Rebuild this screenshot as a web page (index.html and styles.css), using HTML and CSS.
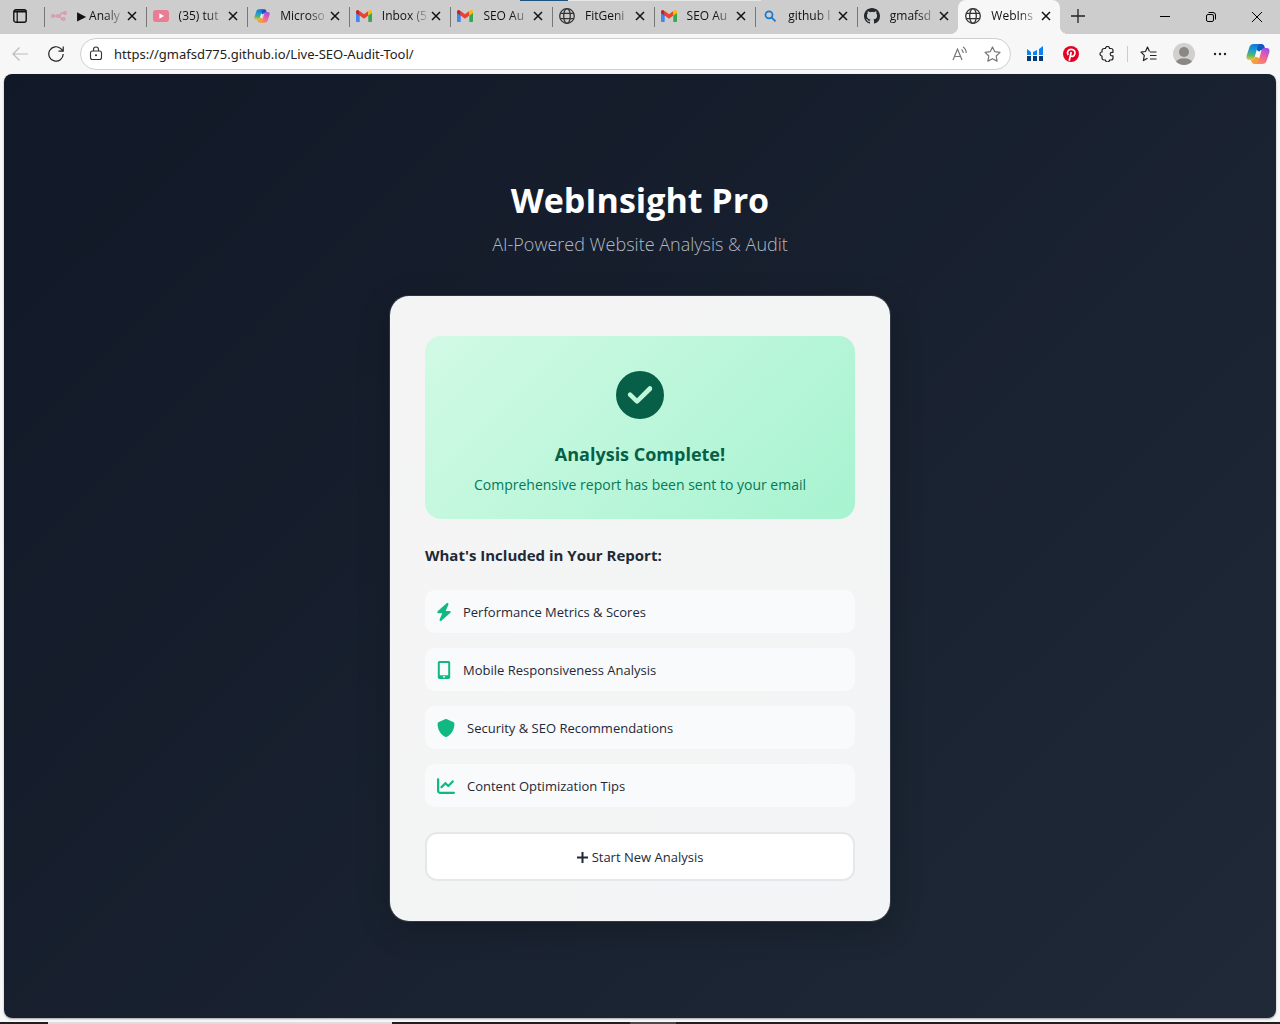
FILE: index.html
```html
<!DOCTYPE html>
<html lang="en">
<head>
<meta charset="utf-8">
<title>WebInsight Pro</title>
<link rel="stylesheet" href="styles.css">
</head>
<body>
<svg class="defs" aria-hidden="true">
  <defs>
    <linearGradient id="cpBlue" x1="0.4" y1="0" x2="0.3" y2="1"><stop offset="0" stop-color="#1378d8"/><stop offset=".4" stop-color="#1b9fd0"/><stop offset=".7" stop-color="#5cb46a"/><stop offset="1" stop-color="#e4cf2a"/></linearGradient>
    <linearGradient id="cpPink" x1=".7" y1="0" x2=".3" y2="1"><stop offset="0" stop-color="#a04de8"/><stop offset=".5" stop-color="#e8629f"/><stop offset="1" stop-color="#ff8a5c"/></linearGradient>
    <symbol id="copilot" viewBox="0 0 24 24">
      <path fill="#1557c0" d="M10 2h5.500c1.600 0 2.500 1 3 2.500L19.500 8H16c-1.500 0-2.400.7-2.900 2L11 8z"/>
      <path fill="url(#cpBlue)" d="M8 2h6c-1.400.4-2 1.400-2.500 3L8.700 15c-.6 2-1.500 3-3.400 3H3.500C.8 18 0 16 .7 13.500L3.300 5.500C4.100 3 5.400 2 8 2z"/>
      <path fill="#f2a03c" d="M14 22H8.500c-1.600 0-2.500-1-3-2.500L4.800 17.900C7.500 18 8.500 17 9.300 14.500L13 16z"/>
      <path fill="url(#cpPink)" d="M16 22h-6c1.400-.4 2-1.400 2.500-3l2.800-10c.6-2 1.500-3 3.400-3h1.800c2.700 0 3.500 2 2.800 4.500l-2.600 8C19.900 21 18.600 22 16 22z"/>
      <path fill="#f7f7f7" d="M13.200 9.500L10.900 15h-1.600L11 9.200z"/>
    </symbol>
    <symbol id="gmail" viewBox="0 0 16 12">
      <path fill="#4285f4" d="M0 2v9c0 .6.400 1 1 1h2.700V5z"/><path fill="#34a853" d="M12.300 12H15c.6 0 1-.4 1-1V2l-3.700 3z"/>
      <path fill="#ea4335" d="M3.700 5.500V1L8 4.300 12.300 1v4.500L8 8.800z"/><path fill="#c5221f" d="M0 2v1l3.700 2.700V1.200L2.600.4C1.500-.4 0 .3 0 2z"/><path fill="#fbbc04" d="M12.300 1v4.700L16 3V2c0-1.700-1.500-2.400-2.600-1.600z"/>
    </symbol>
    <symbol id="globe" viewBox="0 0 16 16"><g fill="none" stroke="#333" stroke-width="1.300"><circle cx="8" cy="8" r="7.300"/><ellipse cx="8" cy="8" rx="3.300" ry="7.300"/><path d="M1.300 5.400h13.400M1.300 10.600h13.400"/></g></symbol>
    <symbol id="close" viewBox="0 0 10 10"><path d="M1 1l8 8M9 1L1 9" fill="none" stroke="#111" stroke-width="1.500"/></symbol>
  </defs>
</svg>

<header class="browser">
  <div class="tabstrip">
    <button class="tab-actions" aria-label="Tab actions"><svg width="14" height="14" viewBox="0 0 14 14"><rect x=".8" y=".8" width="12.400" height="12.400" rx="2" fill="none" stroke="#111" stroke-width="1.400"/><path d="M4.200 3v10" stroke="#111" stroke-width="1.200"/><path d="M1 2.500h12" stroke="#111" stroke-width="2"/></svg></button>
    <nav class="tabs" aria-label="Tabs">
      <div class="tab"><svg class="favicon dim" viewBox="0 0 16 16"><g fill="none" stroke="#ea4b71" stroke-width="1.400"><circle cx="2" cy="8" r="1.300"/><circle cx="7" cy="8" r="1.300"/><circle cx="14" cy="5" r="1.300"/><circle cx="12.500" cy="11" r="1.300"/><path d="M3.300 8h2.400M8.300 8C10 8 9 5 11 5h1.700M8.300 8c1.700 0 1 3 2.900 3"/></g></svg><a href="#" class="tab-title">▶ Analy</a><button class="tab-close" aria-label="Close tab"><svg viewBox="0 0 10 10"><use href="#close"/></svg></button></div>
      <div class="tab"><svg class="favicon" viewBox="0 0 16 16"><rect y="2" width="16" height="12" rx="3" fill="#ea7d92"/><path d="M6.300 5.300v5.400L11 8z" fill="#fff"/></svg><a href="#" class="tab-title">(35) tut</a><button class="tab-close" aria-label="Close tab"><svg viewBox="0 0 10 10"><use href="#close"/></svg></button></div>
      <div class="tab"><svg class="favicon" viewBox="0 0 24 24"><use href="#copilot"/></svg><a href="#" class="tab-title">Microso</a><button class="tab-close" aria-label="Close tab"><svg viewBox="0 0 10 10"><use href="#close"/></svg></button></div>
      <div class="tab"><svg class="favicon" viewBox="0 -2 16 16"><use href="#gmail" width="16" height="12"/></svg><a href="#" class="tab-title">Inbox (5</a><button class="tab-close" aria-label="Close tab"><svg viewBox="0 0 10 10"><use href="#close"/></svg></button></div>
      <div class="tab"><svg class="favicon" viewBox="0 -2 16 16"><use href="#gmail" width="16" height="12"/></svg><a href="#" class="tab-title">SEO Au</a><button class="tab-close" aria-label="Close tab"><svg viewBox="0 0 10 10"><use href="#close"/></svg></button></div>
      <div class="tab"><svg class="favicon" viewBox="0 0 16 16"><use href="#globe"/></svg><a href="#" class="tab-title">FitGeni</a><button class="tab-close" aria-label="Close tab"><svg viewBox="0 0 10 10"><use href="#close"/></svg></button></div>
      <div class="tab"><svg class="favicon" viewBox="0 -2 16 16"><use href="#gmail" width="16" height="12"/></svg><a href="#" class="tab-title">SEO Au</a><button class="tab-close" aria-label="Close tab"><svg viewBox="0 0 10 10"><use href="#close"/></svg></button></div>
      <div class="tab"><svg class="favicon" viewBox="0 0 16 16"><g fill="none" stroke="#1478d4" stroke-width="1.700"><circle cx="7" cy="6.800" r="3.500"/><path d="M9.500 9.300l4 4"/></g></svg><a href="#" class="tab-title">github l</a><button class="tab-close" aria-label="Close tab"><svg viewBox="0 0 10 10"><use href="#close"/></svg></button></div>
      <div class="tab"><svg class="favicon" viewBox="0 0 16 16"><path fill="#24292f" d="M8 0C3.580 0 0 3.580 0 8c0 3.540 2.290 6.530 5.470 7.590.4.070.550-.170.550-.380 0-.190-.010-.820-.010-1.490-2.010.370-2.530-.490-2.690-.940-.090-.230-.480-.940-.820-1.130-.280-.150-.680-.520-.010-.530.630-.010 1.080.580 1.230.820.720 1.210 1.870.870 2.330.660.070-.520.280-.870.510-1.070-1.780-.200-3.640-.890-3.640-3.950 0-.870.310-1.590.820-2.150-.080-.200-.360-1.020.080-2.120 0 0 .670-.210 2.200.820a7.600 7.600 0 0 1 4 0c1.530-1.040 2.200-.820 2.200-.820.440 1.100.160 1.920.080 2.120.510.560.820 1.270.820 2.150 0 3.070-1.870 3.750-3.650 3.950.290.250.540.730.540 1.480 0 1.070-.010 1.930-.010 2.200 0 .210.150.460.550.380A8.010 8.010 0 0 0 16 8c0-4.420-3.580-8-8-8z"/></svg><a href="#" class="tab-title">gmafsd</a><button class="tab-close" aria-label="Close tab"><svg viewBox="0 0 10 10"><use href="#close"/></svg></button></div>
      <div class="tab active"><svg class="favicon" viewBox="0 0 16 16"><use href="#globe"/></svg><a href="#" class="tab-title">WebIns</a><button class="tab-close" aria-label="Close tab"><svg viewBox="0 0 10 10"><use href="#close"/></svg></button></div>
    </nav>
    <button class="new-tab" aria-label="New tab"><svg width="14" height="14" viewBox="0 0 14 14"><path d="M7 0v14M0 7h14" stroke="#222" stroke-width="1.300"/></svg></button>
    <div class="window-controls">
      <button aria-label="Minimize"><svg width="10" height="10" viewBox="0 0 10 10"><path d="M0 4.500h10" stroke="#000"/></svg></button>
      <button aria-label="Restore"><svg width="10" height="10" viewBox="0 0 10 10" fill="none" stroke="#000"><rect x=".5" y="2.500" width="7" height="7" rx="1.500"/><path d="M2.500.5H7A2.500 2.500 0 0 1 9.500 3v4.500"/></svg></button>
      <button aria-label="Close"><svg width="10" height="10" viewBox="0 0 10 10"><path d="M0 0l10 10M10 0L0 10" stroke="#000"/></svg></button>
    </div>
  </div>

  <div class="toolbar">
    <button class="tool" aria-label="Back"><svg width="16" height="14" viewBox="0 0 16 14" fill="none" stroke="#bbb" stroke-width="1.200"><path d="M16 7H1M7.500.5L1 7l6.500 6.500"/></svg></button>
    <button class="tool" aria-label="Refresh"><svg width="16" height="16" viewBox="0 0 16 16" fill="none" stroke="#222" stroke-width="1.200"><path d="M15.200 8A7.200 7.200 0 1 1 12.800 2.600L15 4.800M15.200.5v4.700h-4.700"/></svg></button>
    <div class="address">
      <svg width="14" height="16" viewBox="0 0 14 16" fill="none" stroke="#333" stroke-width="1.100"><rect x="1.500" y="5" width="11" height="8.500" rx="2"/><path d="M4.500 5V3.500a2.500 2.500 0 0 1 5 0V5"/><circle cx="7" cy="9.300" r=".5" fill="#333"/></svg>
      <input type="text" aria-label="Address" value="https://gmafsd775.github.io/Live-SEO-Audit-Tool/">
      <button aria-label="Read aloud"><svg width="16" height="16" viewBox="0 0 16 16" fill="none" stroke="#777" stroke-width="1.200"><path d="M1 14L5.500 3 10 14M2.800 10.500h5.400M9.500 3.500c1.200.8 1.700 2 1.700 3.500M11 1c2 1.200 3.200 3 3.200 6"/></svg></button>
      <button aria-label="Favorite"><svg width="17" height="16" viewBox="0 0 17 16" fill="none" stroke="#777" stroke-width="1.200" stroke-linejoin="round"><path d="M8.500 1l2.300 4.700 5.200.7-3.800 3.600.9 5.100-4.600-2.400-4.600 2.400.9-5.100L1 6.400l5.200-.7z"/></svg></button>
    </div>
    <button class="tool" aria-label="Similarweb"><svg width="16" height="16" viewBox="0 0 16 16"><path fill="#0a84f5" d="M0 3l4 3v3H0zM6 6l4-2v5H6zM12 3l4-3v9h-4z"/><path fill="#073a75" d="M0 10h4v5H0zM6 10h4v5H6zM12 10h4v5h-4z"/></svg></button>
    <button class="tool" aria-label="Pinterest"><svg width="16" height="16" viewBox="0 0 16 16"><circle cx="8" cy="8" r="8" fill="#e60023"/><path d="M6.200 14.800L8.200 6M5.200 9C3.300 6 5.300 3.400 8.200 3.400c3 0 4.300 2.200 3.600 4.600-.7 2.600-3.500 3.200-4.300 1.500" fill="none" stroke="#fff" stroke-width="1.700"/></svg></button>
    <button class="tool" aria-label="Extensions"><svg width="16" height="16" viewBox="0 0 16 16" fill="none" stroke="#222" stroke-width="1.200" stroke-linejoin="round"><path d="M5 2.500h1.500a2 2 0 0 1 4 0H12a2 2 0 0 1 2 2v1.800h-1a1.800 1.800 0 0 0 0 3.600h1V12a2 2 0 0 1-2 2h-1.500a2 2 0 0 1-4 0H5a2 2 0 0 1-2-2v-2a2 2 0 0 1 0-4V4.500a2 2 0 0 1 2-2z"/></svg></button>
    <span class="divider"></span>
    <button class="tool" aria-label="Favorites"><svg width="17" height="16" viewBox="0 0 17 16" fill="none" stroke="#222" stroke-width="1.200" stroke-linejoin="round"><path d="M9.500 5.500L7.500 1 5.500 5.500 1 6.100l3.300 3.300-.9 5.200 4.100-2.300M10 6h6.500M10 9.500h6.500M10 13h6.500"/></svg></button>
    <button class="tool" aria-label="Profile"><svg width="22" height="22" viewBox="0 0 22 22"><circle cx="11" cy="11" r="11" fill="#d2d0ce"/><circle cx="11" cy="9" r="5" fill="#8a8886"/><path d="M3 18.500c3-4.500 13-4.500 16 0a11 11 0 0 1-16 0z" fill="#8a8886"/></svg></button>
    <button class="tool" aria-label="Settings and more"><svg width="14" height="4" viewBox="0 0 14 4" fill="#222"><circle cx="2" cy="2" r="1.200"/><circle cx="7" cy="2" r="1.200"/><circle cx="12" cy="2" r="1.200"/></svg></button>
    <button class="tool tool-last" aria-label="Copilot"><svg width="24" height="24" viewBox="0 0 24 24"><use href="#copilot"/></svg></button>
  </div>
</header>

<main class="page">
  <div class="hero">
    <h1>WebInsight Pro</h1>
    <p>AI-Powered Website Analysis &amp; Audit</p>
  </div>
  <section class="card">
    <div class="success">
      <svg width="48" height="48" viewBox="0 0 512 512" fill="#065f46"><path d="M256 512A256 256 0 1 0 256 0a256 256 0 1 0 0 512zM379 209L241 342c-9.400 9.400-24.600 9.400-33.900 0l-74-74c-9.400-9.400-9.400-24.600 0-33.900s24.600-9.400 33.900 0l57 57L345 168c9.400-9.400 24.600-9.400 33.900 0s9.400 31.600 0 41z"/></svg>
      <h2>Analysis Complete!</h2>
      <p>Comprehensive report has been sent to your email</p>
    </div>
    <h3>What's Included in Your Report:</h3>
    <ul class="features">
      <li><svg width="14" height="18" viewBox="32 0 384 512"><path d="M349.400 44.600c5.900-13.700 1.500-29.700-10.600-38.500s-28.600-8-39.900 1.800l-256 224c-10 8.800-13.600 22.900-8.900 35.300S50.700 288 64 288H175.500L98.600 467.400c-5.900 13.700-1.500 29.700 10.600 38.500s28.600 8 39.900-1.800l256-224c10-8.800 13.600-22.900 8.900-35.300s-16.600-20.700-30-20.700H272.500L349.400 44.600z"/></svg>Performance Metrics &amp; Scores</li>
      <li><svg width="14" height="18" viewBox="0 0 384 512"><path fill-rule="evenodd" d="M16 48C16 22 38 0 64 0H320c26 0 48 22 48 48V464c0 26-22 48-48 48H64c-26 0-48-22-48-48V48zM160 432v40h64v-40zM312 56H72V408H312V56z"/></svg>Mobile Responsiveness Analysis</li>
      <li><svg width="18" height="18" viewBox="0 0 512 512"><path d="M256 0c4.600 0 9.200 1 13.400 2.900L457.700 82.800c22 9.300 38.400 31 38.300 57.200-.5 99.200-41.300 280.700-213.600 363.200-16.700 8-36.100 8-52.800 0C57.300 420.700 16.500 239.200 16 140c-.1-26.200 16.300-47.900 38.300-57.200L242.700 2.900C246.800 1 251.400 0 256 0z"/></svg>Security &amp; SEO Recommendations</li>
      <li><svg width="18" height="18" viewBox="0 0 512 512"><path d="M64 64c0-17.700-14.300-32-32-32S0 46.300 0 64V400c0 44.200 35.800 80 80 80H480c17.700 0 32-14.300 32-32s-14.300-32-32-32H80c-8.800 0-16-7.200-16-16V64zm406.600 86.600c12.500-12.500 12.500-32.800 0-45.300s-32.800-12.500-45.300 0L320 210.700l-57.400-57.400c-12.500-12.500-32.800-12.500-45.300 0l-112 112c-12.500 12.500-12.500 32.800 0 45.300s32.800 12.500 45.300 0L240 221.300l57.400 57.400c12.500 12.500 32.800 12.500 45.300 0l128-128z"/></svg>Content Optimization Tips</li>
    </ul>
    <button class="restart"><svg width="11" height="11" viewBox="0 0 11 11"><path d="M5.500 0v11M0 5.500h11" stroke="#1f2937" stroke-width="2"/></svg>Start New Analysis</button>
  </section>
</main>
<footer class="taskbar"><span class="task-light"></span><span class="task-gap"></span><span class="task-mid"></span></footer>
</body>
</html>
```

FILE: styles.css
```css
* { box-sizing: border-box; margin: 0; padding: 0; }

body {
  min-height: 100vh;
  display: flex;
  flex-direction: column;
  background: #f7f7f7;
  font-family: "Open Sans", "Noto Sans", sans-serif;
  color: #1f2937;
}

button { border: 0; background: none; font: inherit; color: inherit; display: flex; align-items: center; justify-content: center; }
svg { display: block; flex: none; }
.defs { position: absolute; width: 0; height: 0; }

/* Tab strip */
.tabstrip { display: flex; height: 34px; background: #cdcdcd; position: relative; }
.tabstrip::before {
  content: ""; position: absolute; top: 0; left: 520px; width: 241px; height: 1px;
  background: linear-gradient(90deg, #1d5480 48px, #e6e6e6 48px);
}
.tab-actions { width: 44px; padding: 0 4px 2px 0; }
.tabs { flex: 1; display: flex; min-width: 0; }
.tab { flex: 1 1 0; min-width: 0; display: flex; align-items: center; padding: 0 6px 2px 7px; position: relative; }
.tab::before { content: ""; position: absolute; left: 0; top: 7px; width: 1px; height: 20px; background: #777; }
.tab.active { background: #f7f7f7; border-radius: 8px 8px 0 0; }
.tab.active::before { display: none; }
.tab.active::after {
  content: ""; position: absolute; bottom: 0; left: -8px; right: -8px; height: 8px;
  background:
    radial-gradient(circle at 0 0, #cdcdcd 8px, #f7f7f7 8px) left / 8px 8px no-repeat,
    radial-gradient(circle at 100% 0, #cdcdcd 8px, #f7f7f7 8px) right / 8px 8px no-repeat;
}
.favicon { width: 16px; height: 16px; }
.favicon.dim { opacity: .4; }
.tab-title {
  flex: 1; min-width: 0; margin-left: 10px; white-space: nowrap;
  font-size: 12px; line-height: 16px; color: #111; text-decoration: none;
  mask-image: linear-gradient(90deg, #000 60%, rgba(0, 0, 0, .1));
}
.tab-close { width: 16px; height: 16px; }
.tab-close svg { width: 10px; height: 10px; }
.new-tab { width: 36px; padding-bottom: 2px; }
.window-controls { display: flex; margin-left: 46px; }
.window-controls button { width: 46px; }

/* Toolbar */
.toolbar { display: flex; align-items: center; height: 40px; padding: 0 4px 0 2px; }
.tool { width: 36px; height: 32px; }
.address {
  flex: 1; min-width: 0; height: 32px; margin: 0 6px; padding: 0 8px;
  display: flex; align-items: center;
  background: #fff; border: 1px solid #cfcfd2; border-radius: 16px;
}
.address input {
  flex: 1; min-width: 0; margin-left: 11px; border: 0; outline: 0; background: none;
  font-family: "Noto Sans", sans-serif; font-size: 13px; line-height: 20px; color: #222;
}
.address button { width: 32px; height: 30px; }
.address button:last-child { margin-right: -6px; }
.divider { width: 1px; height: 16px; margin: 0 2px; background: #ccc; }
.tool-last { margin-left: 2px; }

/* Web page */
.page {
  flex: 1; margin: 0 4px; padding: 20px;
  display: flex; flex-direction: column; align-items: center; justify-content: center;
  border-radius: 8px;
  background: linear-gradient(135deg, #111827, #1f2937);
  box-shadow: 0 1px 2px rgba(0, 0, 0, .35);
}
.hero { text-align: center; margin-bottom: 37px; }
.hero h1 { font-size: 34px; line-height: 58px; font-weight: 700; color: #fff; }
.hero p { margin-top: 1px; font-size: 18px; line-height: 28px; font-weight: 300; color: #b4b9c4; }

.card {
  width: 100%; max-width: 502px; padding: 40px 35px;
  border: 1px solid rgba(255, 255, 255, .1); border-radius: 20px;
  background: linear-gradient(135deg, #f4f4f4, #f3f5f4 50%, #f3f4f6); background-clip: padding-box;
  box-shadow: 0 8px 32px rgba(0, 0, 0, .2);
}
.success {
  display: flex; flex-direction: column; align-items: center; text-align: center;
  padding: 35px 20px 21px; border-radius: 16px;
  background: linear-gradient(135deg, #d1fae5, #a7f3d0);
}
.success h2 { margin-top: 20px; font-size: 18px; line-height: 30px; color: #065f46; }
.success p { margin-top: 3px; font-size: 14px; line-height: 26px; color: #047857; }
.card h3 { margin-top: 23px; font-size: 15px; line-height: 26px; }
.features { list-style: none; margin-top: 22px; display: grid; gap: 15px; }
.features li {
  display: flex; align-items: center; gap: 12px; padding: 1px 12px 0;
  font-size: 13px; line-height: 42px; background: #f9fafc; border-radius: 10px;
}
.features svg { fill: #10b981; }
.restart {
  width: 100%; margin-top: 25px; padding: 13px 12px 11px; gap: 4px;
  border: 2px solid #e5e7eb; border-radius: 12px; background: #fff;
  font-size: 13px; line-height: 21px; font-weight: 500;
}

/* Taskbar edge below the window */
.taskbar { display: flex; height: 2px; margin-top: 4px; background: #1e1e1e; }
.task-light { width: 344px; margin-left: 48px; background: #ddd; }
.task-gap { width: 238px; }
.task-mid { width: 46px; background: #4a4a4a; }
```
